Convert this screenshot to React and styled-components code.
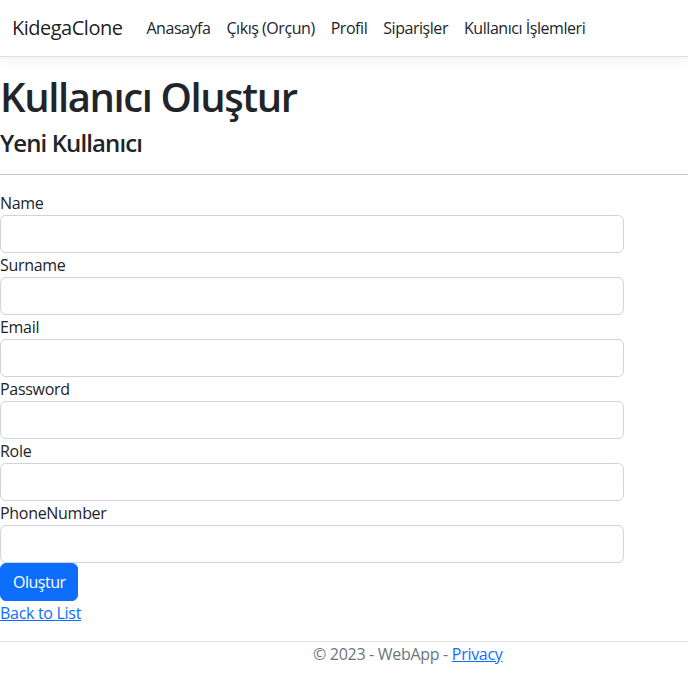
import React from "react";
import styled, { createGlobalStyle } from "styled-components";

const Global = createGlobalStyle`
  html, body { margin: 0; padding: 0; background: #fff; }
  body {
    font-family: "Open Sans", "Noto Sans", sans-serif;
    font-size: 16px;
    line-height: 1.5;
    color: #212529;
    letter-spacing: -0.3px;
  }
  * { box-sizing: border-box; }
`;

const Nav = styled.header`
  display: flex;
  align-items: center;
  height: 57px;
  padding: 0 12px;
  border-bottom: 1px solid #dee2e6;
  box-shadow: 0 0.25rem 0.75rem rgba(0, 0, 0, 0.05);
`;

const Brand = styled.a`
  font-size: 20px;
  letter-spacing: -0.5px;
  color: rgba(0, 0, 0, 0.9);
  text-decoration: none;
  margin-right: 16px;
  line-height: 30px;
`;

const NavList = styled.nav`
  display: flex;
`;

const NavLink = styled.a`
  padding: 8px;
  font-size: 16px;
  line-height: 24px;
  letter-spacing: -0.45px;
  color: #212529;
  text-decoration: none;
`;

const Main = styled.main`
  padding-top: 16px;
  padding-bottom: 16px;
`;

const Title = styled.h1`
  margin: 0 0 8px;
  font-size: 40px;
  font-weight: 600;
  letter-spacing: -1.4px;
  line-height: 1.2;
`;

const Subtitle = styled.h4`
  margin: 0;
  font-size: 24px;
  font-weight: 600;
  letter-spacing: -0.9px;
  line-height: 1.2;
`;

const Rule = styled.hr`
  margin: 16px 0;
  border: 0;
  border-top: 1px solid rgba(33, 37, 41, 0.25);
`;

const Form = styled.form`
  width: 624px;
  display: flex;
  flex-direction: column;
`;

const Label = styled.label`
  display: block;
  line-height: 24px;
`;

const Input = styled.input`
  display: block;
  width: 100%;
  height: 38px;
  padding: 6px 12px;
  font: inherit;
  border: 1px solid #ced4da;
  border-radius: 6px;
  background: #fff;
`;

const Button = styled.button`
  align-self: flex-start;
  height: 38px;
  padding: 6px 12px;
  font: inherit;
  letter-spacing: -0.5px;
  color: #fff;
  background: #0d6efd;
  border: 1px solid #0d6efd;
  border-radius: 6px;
`;

const Link = styled.a`
  color: #0d6efd;
  text-decoration: underline;
`;

const Footer = styled.footer`
  border-top: 1px solid #dee2e6;
  padding-left: 313px;
  line-height: 24px;
  color: #6c757d;
`;

const fields = ["Name", "Surname", "Email", "Password", "Role", "PhoneNumber"];

export default function App() {
  return (
    <>
      <Global />
      <Nav>
        <Brand href="#">KidegaClone</Brand>
        <NavList>
          <NavLink href="#">Anasayfa</NavLink>
          <NavLink href="#">Çıkış (Orçun)</NavLink>
          <NavLink href="#">Profil</NavLink>
          <NavLink href="#">Siparişler</NavLink>
          <NavLink href="#">Kullanıcı İşlemleri</NavLink>
        </NavList>
      </Nav>
      <Main>
        <Title>Kullanıcı Oluştur</Title>
        <Subtitle>Yeni Kullanıcı</Subtitle>
        <Rule />
        <Form onSubmit={(e) => e.preventDefault()}>
          {fields.map((f) => (
            <React.Fragment key={f}>
              <Label htmlFor={f}>{f}</Label>
              <Input id={f} />
            </React.Fragment>
          ))}
          <Button type="submit">Oluştur</Button>
        </Form>
        <div>
          <Link href="#">Back to List</Link>
        </div>
      </Main>
      <Footer>
        © 2023 - WebApp - <Link href="#">Privacy</Link>
      </Footer>
    </>
  );
}
